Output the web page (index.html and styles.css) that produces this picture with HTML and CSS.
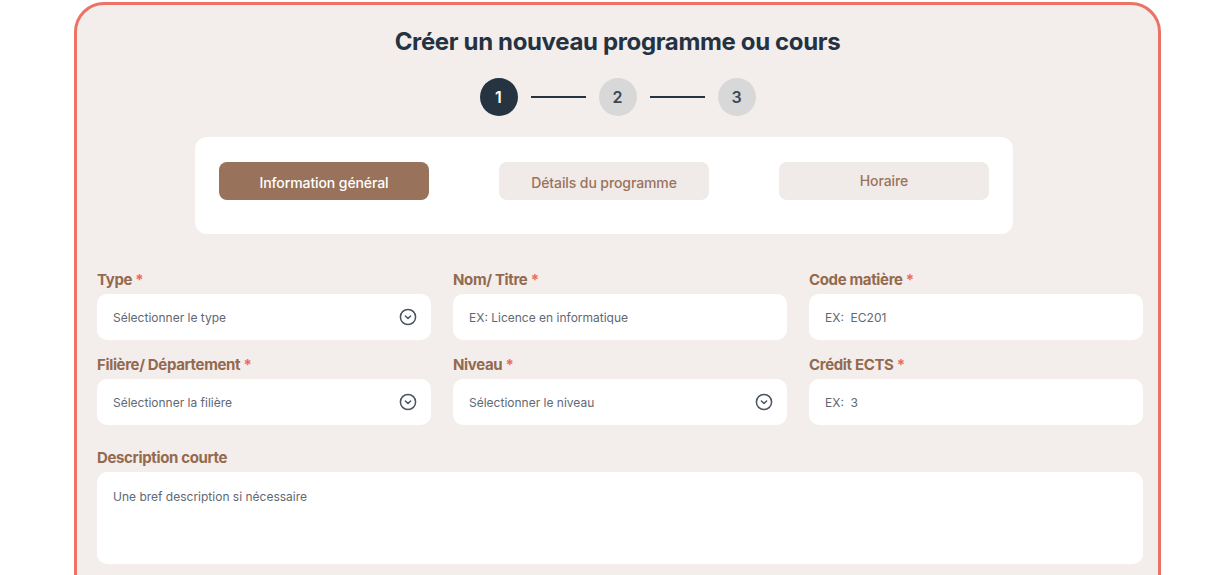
FILE: index.html
```html
<!DOCTYPE html>
<html lang="fr">
<head>
<meta charset="utf-8">
<title>Créer un nouveau programme ou cours</title>
<link rel="stylesheet" href="styles.css">
</head>
<body>
<div class="card">
  <h1 class="title">Créer un nouveau programme ou cours</h1>
  <div class="stepper">
    <span class="step active">1</span>
    <span class="line"></span>
    <span class="step">2</span>
    <span class="line"></span>
    <span class="step">3</span>
  </div>
  <div class="tabs">
    <button class="tab active">Information général</button>
    <button class="tab">Détails du programme</button>
    <button class="tab up">Horaire</button>
  </div>
  <div class="form">
    <div class="grid">
      <div class="field">
        <label class="label">Type <span class="req">*</span></label>
        <div class="input"><span>Sélectionner le type</span>
          <svg class="chev" width="18" height="18" viewBox="0 0 18 18"><circle cx="9" cy="9" r="7.6" fill="none" stroke="#4a5461" stroke-width="1.5"/><path d="M6.4 8 L9 10.5 L11.6 8" fill="none" stroke="#4a5461" stroke-width="1.5" stroke-linecap="round" stroke-linejoin="round"/></svg>
        </div>
      </div>
      <div class="field">
        <label class="label">Nom/ Titre <span class="req">*</span></label>
        <div class="input"><span>EX: Licence en informatique</span></div>
      </div>
      <div class="field">
        <label class="label">Code matière <span class="req">*</span></label>
        <div class="input"><span>EX:&nbsp; EC201</span></div>
      </div>
      <div class="field">
        <label class="label">Filière/ Département <span class="req">*</span></label>
        <div class="input"><span>Sélectionner la filière</span>
          <svg class="chev" width="18" height="18" viewBox="0 0 18 18"><circle cx="9" cy="9" r="7.6" fill="none" stroke="#4a5461" stroke-width="1.5"/><path d="M6.4 8 L9 10.5 L11.6 8" fill="none" stroke="#4a5461" stroke-width="1.5" stroke-linecap="round" stroke-linejoin="round"/></svg>
        </div>
      </div>
      <div class="field">
        <label class="label">Niveau <span class="req">*</span></label>
        <div class="input"><span>Sélectionner le niveau</span>
          <svg class="chev" width="18" height="18" viewBox="0 0 18 18"><circle cx="9" cy="9" r="7.6" fill="none" stroke="#4a5461" stroke-width="1.5"/><path d="M6.4 8 L9 10.5 L11.6 8" fill="none" stroke="#4a5461" stroke-width="1.5" stroke-linecap="round" stroke-linejoin="round"/></svg>
        </div>
      </div>
      <div class="field">
        <label class="label">Crédit ECTS <span class="req">*</span></label>
        <div class="input"><span>EX:&nbsp; 3</span></div>
      </div>
    </div>
    <div class="field desc">
      <label class="label">Description courte</label>
      <div class="textarea">Une bref description si nécessaire</div>
    </div>
  </div>
</div>
</body>
</html>
```
FILE: styles.css
```css
* { box-sizing: border-box; }
html, body { margin: 0; padding: 0; background: #ffffff; }
body { font-family: "Inter", "Noto Sans", sans-serif; overflow: hidden; }

.card {
  margin: 2px 0 0 74px;
  width: 1087px;
  height: 700px;
  border: 3px solid #ec7266;
  border-radius: 30px;
  background: #f3eeeb;
  padding-top: 22px;
}

.title {
  margin: 0;
  text-align: center;
  font-size: 24px;
  line-height: 30px;
  font-weight: 700;
  color: #243241;
  letter-spacing: -0.35px;
}

.stepper {
  display: flex;
  justify-content: center;
  align-items: center;
  margin-top: 21px;
  gap: 13px;
}
.step {
  width: 38px;
  height: 38px;
  border-radius: 50%;
  background: #d8d8d8;
  color: #3b4856;
  display: flex;
  align-items: center;
  justify-content: center;
  font-size: 16px;
  font-weight: 600;
}
.step.active { background: #263442; color: #ffffff; }
.line { width: 55px; height: 2px; background: #263442; }

.tabs {
  margin: 21px 0 0 118px;
  width: 818px;
  background: #ffffff;
  border-radius: 12px;
  padding: 25px 23px 34px 24px;
  display: flex;
  gap: 70px;
}
.tab {
  width: 210px;
  height: 38px;
  border: none;
  border-radius: 8px;
  background: #f0ebe9;
  color: #9a735c;
  font-family: "Inter", "Noto Sans", sans-serif;
  font-size: 14px;
  font-weight: 500;
  letter-spacing: -0.1px;
  padding: 2px 0 0;
}
.tab.up { padding: 0 0 2px; }
.tab.active { background: #98725a; color: #ffffff; }

.form { padding: 36px 15px 0 20px; }
.grid {
  display: grid;
  grid-template-columns: repeat(3, 334px);
  column-gap: 22px;
  row-gap: 15px;
}
.field { display: flex; flex-direction: column; }
.label {
  font-size: 15px;
  line-height: 20px;
  font-weight: 700;
  color: #946a4f;
  letter-spacing: -0.35px;
  margin-bottom: 4px;
}
.req { color: #ee6a5e; }
.input {
  height: 46px;
  background: #ffffff;
  border-radius: 10px;
  display: flex;
  align-items: center;
  justify-content: space-between;
  padding: 0 14px 0 16px;
  font-size: 12px;
  color: #5f6873;
  letter-spacing: 0;
}
.chev { display: block; }
.desc { margin-top: 23px; }
.desc .label { margin-bottom: 4px; }
.textarea {
  height: 92px;
  background: #ffffff;
  border-radius: 10px;
  padding: 17px 16px;
  font-size: 12px;
  line-height: 16px;
  color: #5f6873;
  letter-spacing: 0;
}
```
